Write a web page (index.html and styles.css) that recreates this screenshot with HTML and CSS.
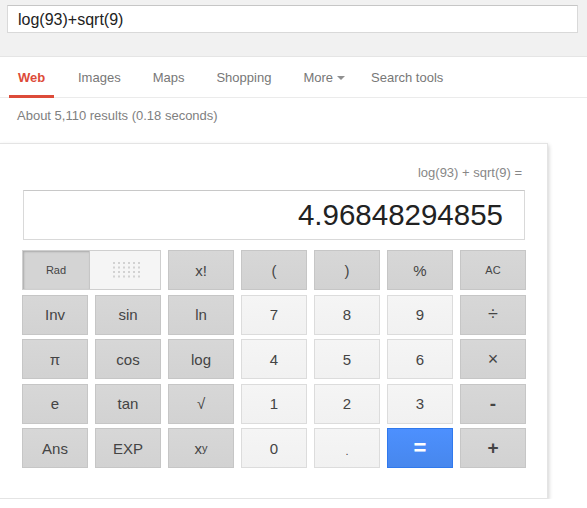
FILE: index.html
```html
<!DOCTYPE html>
<html lang="en">

<head>
    <meta charset="UTF-8">
    <meta name="viewport" content="width=device-width, initial-scale=1.0">
    <title>log(93)+sqrt(9)</title>
    <link rel="stylesheet" href="styles.css">
</head>

<body>
    <div class="top">
        <div class="search">log(93)+sqrt(9)</div>
    </div>

    <div class="tabs">
        <a href="#" class="tab select">Web</a>
        <a href="#" class="tab">Images</a>
        <a href="#" class="tab">Maps</a>
        <a href="#" class="tab">Shopping</a>
        <a href="#" class="tab more">More<span class="arrow"></span></a>
        <a href="#" class="tab">Search tools</a>
    </div>

    <div class="stats">About 5,110 results (0.18 seconds)</div>

    <div class="calc">
        <div class="expr">log(93) + sqrt(9) =</div>
        <div class="screen">4.96848294855</div>

        <div class="keys">
            <div class="key toggle">
                <span class="rad">Rad</span>
                <span class="deg">
                    <svg width="27" height="16" viewBox="0 0 27 16">
                        <g fill="#d2d2d2">
                            <rect x="0" y="0" width="2" height="2"/><rect x="5" y="0" width="2" height="2"/><rect x="10" y="0" width="2" height="2"/><rect x="15" y="0" width="2" height="2"/><rect x="20" y="0" width="2" height="2"/><rect x="25" y="0" width="2" height="2"/>
                            <rect x="0" y="4.5" width="2" height="2"/><rect x="5" y="4.5" width="2" height="2"/><rect x="10" y="4.5" width="2" height="2"/><rect x="15" y="4.5" width="2" height="2"/><rect x="20" y="4.5" width="2" height="2"/><rect x="25" y="4.5" width="2" height="2"/>
                            <rect x="0" y="9" width="2" height="2"/><rect x="5" y="9" width="2" height="2"/><rect x="10" y="9" width="2" height="2"/><rect x="15" y="9" width="2" height="2"/><rect x="20" y="9" width="2" height="2"/><rect x="25" y="9" width="2" height="2"/>
                            <rect x="0" y="13.5" width="2" height="2"/><rect x="5" y="13.5" width="2" height="2"/><rect x="10" y="13.5" width="2" height="2"/><rect x="15" y="13.5" width="2" height="2"/><rect x="20" y="13.5" width="2" height="2"/><rect x="25" y="13.5" width="2" height="2"/>
                        </g>
                    </svg>
                </span>
            </div>
            <div class="key fn">x!</div>
            <div class="key fn">(</div>
            <div class="key fn">)</div>
            <div class="key fn">%</div>
            <div class="key fn small">AC</div>

            <div class="key fn">Inv</div>
            <div class="key fn">sin</div>
            <div class="key fn">ln</div>
            <div class="key num">7</div>
            <div class="key num">8</div>
            <div class="key num">9</div>
            <div class="key fn op thin">÷</div>

            <div class="key fn">π</div>
            <div class="key fn">cos</div>
            <div class="key fn">log</div>
            <div class="key num">4</div>
            <div class="key num">5</div>
            <div class="key num">6</div>
            <div class="key fn op thin">×</div>

            <div class="key fn">e</div>
            <div class="key fn">tan</div>
            <div class="key fn">√</div>
            <div class="key num">1</div>
            <div class="key num">2</div>
            <div class="key num">3</div>
            <div class="key fn op">-</div>

            <div class="key fn">Ans</div>
            <div class="key fn">EXP</div>
            <div class="key fn">x<sup>y</sup></div>
            <div class="key num">0</div>
            <div class="key num dot">.</div>
            <div class="key eq">=</div>
            <div class="key fn op">+</div>
        </div>
    </div>
</body>

</html>
```

FILE: styles.css
```css
* {
    margin: 0;
    padding: 0;
    box-sizing: border-box;
}

body {
    font-family: "Liberation Sans", Arial, sans-serif;
    font-size: 13px;
    color: #222;
    background: #fff;
}

.top {
    height: 57px;
    background: #f1f1f1;
    border-bottom: 1px solid #e5e5e5;
    padding: 5px 9px 0 7px;
}

.search {
    height: 28px;
    line-height: 27px;
    padding-left: 10px;
    font-size: 16px;
    color: #222;
    background: #fff;
    border: 1px solid #d9d9d9;
    border-top-color: #c6c6c6;
}

.tabs {
    display: flex;
    gap: 16px;
    height: 41px;
    padding-left: 9px;
    border-bottom: 1px solid #ebebeb;
}

.tab {
    display: flex;
    align-items: center;
    padding: 2px 8px 0;
    height: 41px;
    color: #777;
    text-decoration: none;
    border-bottom: 3px solid transparent;
}

.tab.select {
    min-width: 45px;
    justify-content: center;
    color: #dd4b39;
    font-weight: bold;
    border-bottom-color: #dd4b39;
}

.tab.more {
    padding-right: 2px;
}

.arrow {
    display: inline-block;
    margin-left: 4px;
    margin-top: 2px;
    border-left: 4px solid transparent;
    border-right: 4px solid transparent;
    border-top: 4px solid #909090;
}

.stats {
    margin-top: 10px;
    padding-left: 17px;
    line-height: 16px;
    color: #808080;
}

.calc {
    width: 549px;
    margin: 19px 0 0 -1px;
    padding: 21px 21px 30px 22px;
    border: 1px solid #e4e4e4;
    box-shadow: 1px 2px 4px rgba(0, 0, 0, 0.18);
}

.expr {
    text-align: right;
    padding-right: 4px;
    line-height: 16px;
    color: #878787;
}

.screen {
    height: 50px;
    margin: 9px 1px 0;
    padding-right: 21px;
    line-height: 48px;
    text-align: right;
    font-size: 29.5px;
    color: #222;
    border: 1px solid #d9d9d9;
    border-top-color: #c8c8c8;
}

.keys {
    display: grid;
    grid-template-columns: repeat(7, 66px);
    grid-auto-rows: 40px;
    column-gap: 7px;
    row-gap: 4.5px;
    margin-top: 10px;
}

.key {
    display: flex;
    align-items: center;
    justify-content: center;
    font-size: 15px;
    color: #444;
    border: 1px solid #c6c6c6;
    background: linear-gradient(#d7d7d7, #d2d2d2);
}

.key.num {
    background: linear-gradient(#f5f5f5, #f1f1f1);
    border-color: #dcdcdc;
}

.key.small {
    font-size: 11px;
}

.key.op {
    font-size: 19px;
    font-weight: bold;
}

.key.op.thin {
    font-size: 18px;
    font-weight: normal;
}

.key.dot {
    font-size: 11px;
    padding-top: 6px;
}

.key.eq {
    color: #fff;
    font-size: 22px;
    font-weight: bold;
    background: linear-gradient(#4d90fe, #4787ed);
    border-color: #3079ed;
}

.key sup {
    font-size: 11px;
    vertical-align: 6px;
}

.toggle {
    grid-column: span 2;
    justify-content: flex-start;
    align-items: stretch;
    background: #f5f5f5;
    border-color: #cfcfcf;
}

.rad {
    display: flex;
    align-items: center;
    justify-content: center;
    width: 67px;
    font-size: 11px;
    background: #d4d4d4;
    box-shadow: inset 1px 1px 2px rgba(0, 0, 0, 0.2);
    border-right: 1px solid #c6c6c6;
}

.deg {
    flex: 1;
    display: flex;
    align-items: center;
    justify-content: center;
    padding-left: 3px;
}
```
